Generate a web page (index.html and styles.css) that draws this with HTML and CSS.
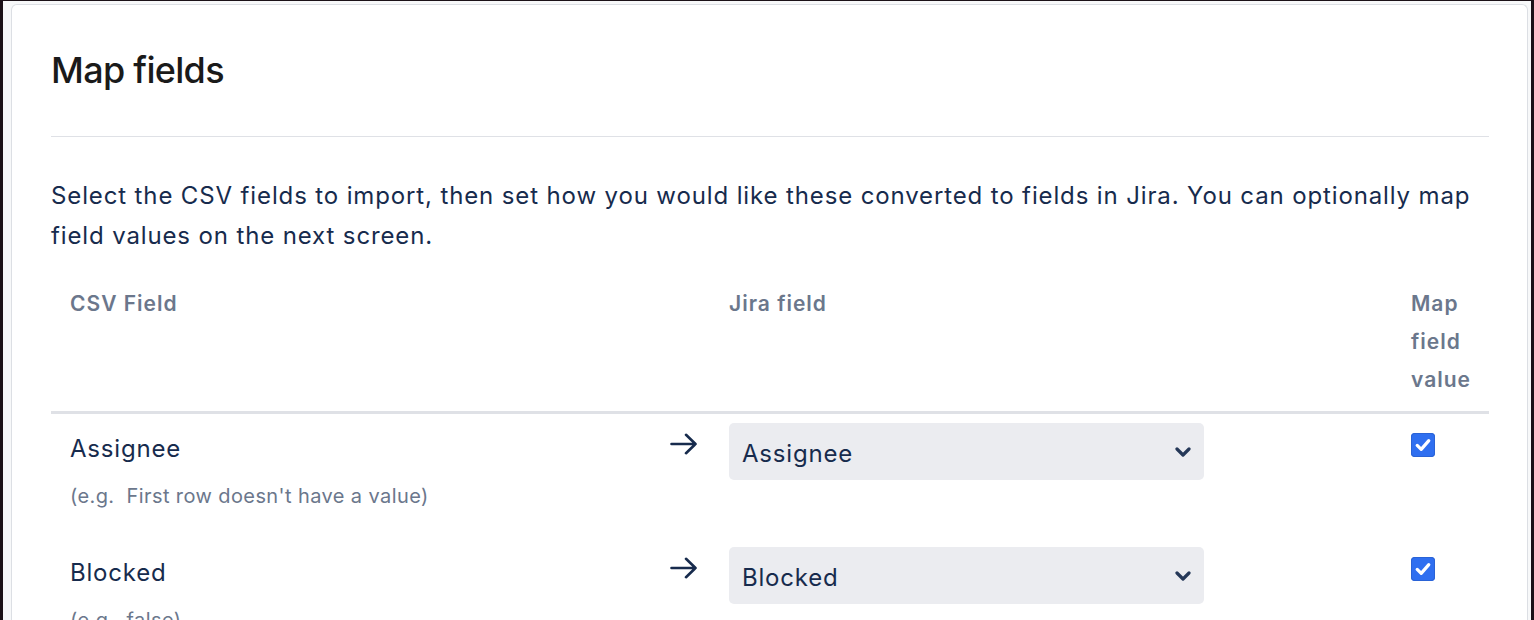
FILE: index.html
```html
<!DOCTYPE html>
<html lang="en">
<head>
<meta charset="utf-8">
<title>Map fields</title>
<link rel="stylesheet" href="styles.css">
</head>
<body>
<div class="window">
  <div class="panel">
    <h1 class="title">Map fields</h1>
    <hr class="rule">
    <p class="intro">Select the CSV fields to import, then set how you would like these converted to fields in Jira. You can optionally map field values on the next screen.</p>
    <div class="table">
      <div class="row head">
        <div class="th">CSV Field</div>
        <div></div>
        <div class="th">Jira field</div>
        <div class="th">Map field value</div>
      </div>
      <div class="row body">
        <div class="csv">
          <div class="label">Assignee</div>
          <div class="hint">(e.g.&nbsp; First row doesn't have a value)</div>
        </div>
        <div class="arrow">
          <svg width="28" height="22" viewBox="0 0 28 22"><path d="M1.5 11H25.5M16 1.8L25.5 11L16 20.2" fill="none" stroke="#172b4d" stroke-width="2.6" stroke-linecap="round" stroke-linejoin="round"/></svg>
        </div>
        <div class="jira">
          <div class="select"><span>Assignee</span>
            <svg class="chev" width="16" height="10" viewBox="0 0 16 10"><path d="M2 2L8 8L14 2" fill="none" stroke="#253858" stroke-width="3.2" stroke-linecap="round" stroke-linejoin="round"/></svg>
          </div>
        </div>
        <div class="map">
          <span class="check"><svg width="24" height="24" viewBox="0 0 24 24"><path d="M6.2 12.4L10.2 16.4L17.8 7.6" fill="none" stroke="#fff" stroke-width="3.2" stroke-linecap="round" stroke-linejoin="round"/></svg></span>
        </div>
      </div>
      <div class="row body">
        <div class="csv">
          <div class="label">Blocked</div>
          <div class="hint">(e.g.&nbsp; false)</div>
        </div>
        <div class="arrow">
          <svg width="28" height="22" viewBox="0 0 28 22"><path d="M1.5 11H25.5M16 1.8L25.5 11L16 20.2" fill="none" stroke="#172b4d" stroke-width="2.6" stroke-linecap="round" stroke-linejoin="round"/></svg>
        </div>
        <div class="jira">
          <div class="select"><span>Blocked</span>
            <svg class="chev" width="16" height="10" viewBox="0 0 16 10"><path d="M2 2L8 8L14 2" fill="none" stroke="#253858" stroke-width="3.2" stroke-linecap="round" stroke-linejoin="round"/></svg>
          </div>
        </div>
        <div class="map">
          <span class="check"><svg width="24" height="24" viewBox="0 0 24 24"><path d="M6.2 12.4L10.2 16.4L17.8 7.6" fill="none" stroke="#fff" stroke-width="3.2" stroke-linecap="round" stroke-linejoin="round"/></svg></span>
        </div>
      </div>
    </div>
  </div>
</div>
</body>
</html>
```

FILE: styles.css
```css
html, body {
  margin: 0;
  padding: 0;
  height: 100%;
  overflow: hidden;
}
body {
  background: #1b1117;
  font-family: Inter, "Noto Sans", sans-serif;
  color: #172b4d;
}
.window {
  margin: 1px 3px 0 3px;
  padding: 3px 3px 0 8px;
  background: #f7f8f9;
  height: calc(100% - 1px);
  box-sizing: border-box;
}
.panel {
  background: #fff;
  border: 1px solid #dcdfe4;
  border-bottom: none;
  border-radius: 6px 6px 0 0;
  padding: 43px 38px 0 39px;
  height: 100%;
  box-sizing: border-box;
}
.title {
  margin: 0;
  font-size: 36px;
  line-height: 44px;
  font-weight: 500;
  color: #1a1a1a;
  letter-spacing: -0.7px;
}
.rule {
  margin: 44px 0 0;
  border: none;
  border-top: 1px solid #dfe1e6;
  height: 0;
}
.intro {
  margin: 39px 0 0;
  font-size: 24px;
  line-height: 40px;
  letter-spacing: 0.87px;
}
.table {
  margin-top: 29px;
}
.row {
  display: grid;
  grid-template-columns: 590px 69px 682px 60px;
  padding: 0 18px 0 19px;
}
.head {
  padding-bottom: 12px;
  border-bottom: 3px solid #dfe1e6;
}
.th {
  font-size: 21px;
  line-height: 38px;
  font-weight: 600;
  letter-spacing: 1px;
  color: #6b778c;
}
.body {
  padding-top: 9px;
  padding-bottom: 27px;
}
.label {
  margin-top: 6px;
  font-size: 24px;
  line-height: 40px;
  letter-spacing: 0.8px;
}
.hint {
  margin-top: 12px;
  font-size: 20px;
  line-height: 30px;
  letter-spacing: 0.4px;
  color: #6b778c;
}
.arrow {
  padding: 10px 0 0 10px;
}
.arrow svg {
  display: block;
}
.select {
  width: 475px;
  height: 57px;
  box-sizing: border-box;
  background: #ebecf0;
  border-radius: 5px;
  display: flex;
  align-items: center;
  justify-content: space-between;
  padding: 3px 13px 0;
  font-size: 24px;
  letter-spacing: 0.8px;
}
.chev {
  display: block;
  margin-top: -3px;
}
.map {
  padding-top: 10px;
}
.check {
  display: block;
  width: 24px;
  height: 24px;
  border-radius: 4px;
  background: #2f6ff0;
  box-shadow: inset 0 0 0 1px #2a63d6;
}
.check svg {
  display: block;
}
```
